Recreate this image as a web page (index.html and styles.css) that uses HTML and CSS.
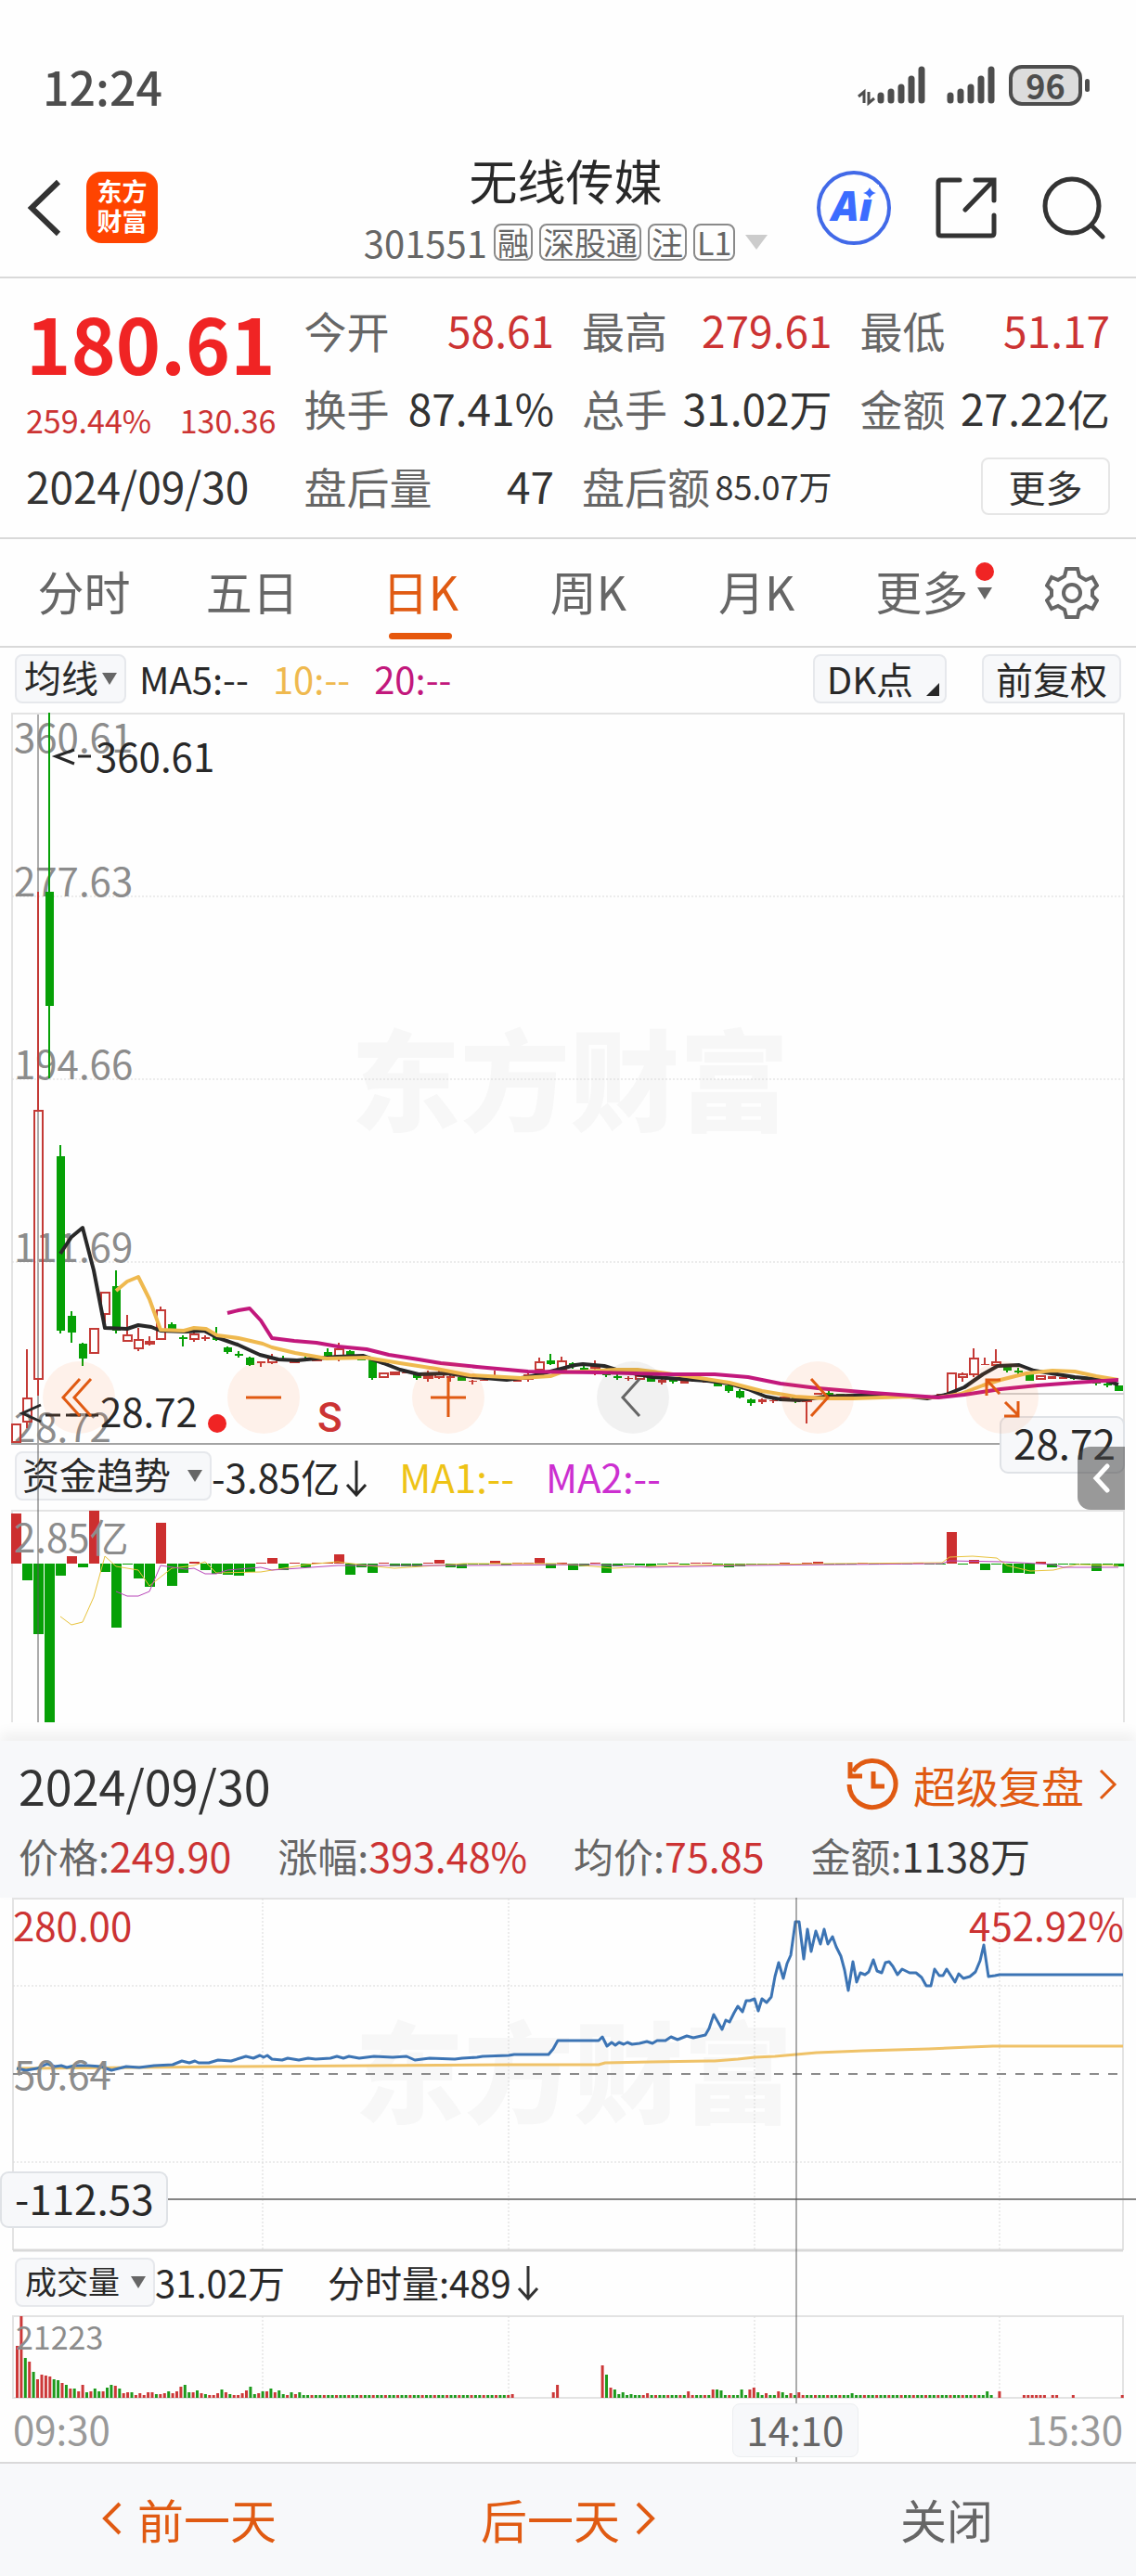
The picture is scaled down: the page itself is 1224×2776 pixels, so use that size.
FILE: index.html
```html
<!DOCTYPE html>
<html lang="zh-CN">
<head>
  <meta charset="UTF-8">
  <title>无线传媒 301551</title>
  <meta name="viewport" content="width=device-width, initial-scale=1.0">
  <link rel="stylesheet" href="styles.css">
</head>
<body>

  <div class="status">
    <span class="hora">12:24</span>
    <svg class="signal" viewBox="0 0 150 44" width="150" height="44">
      <path d="M2 34l6-5v12M13 29v12l6-5" fill="none" stroke="#4d4d4d" stroke-width="3"/>
      <g stroke="#4d4d4d" stroke-width="7" stroke-linecap="round">
        <path d="M26 33v5M37 29v9M48 24v14M59 15v23M70 5v33"/>
        <path d="M101 33v5M112 29v9M123 24v14M134 15v23M145 5v33"/>
      </g>
    </svg>
    <span class="battery">96</span>
  </div>

  <header class="header">
    <div class="side">
      <button class="icon" aria-label="返回">
        <svg viewBox="0 0 40 64" width="40" height="64"><path d="M35 4L6 32l29 28" fill="none" stroke="#333" stroke-width="6"/></svg>
      </button>
      <a class="logo" href="#">东方<br>财富</a>
    </div>
    <div class="title">
      <h1>无线传媒</h1>
      <div class="code">
        <span>301551</span><em>融</em><em>深股通</em><em>注</em><em>L1</em><i class="down"></i>
      </div>
    </div>
    <div class="side right">
      <button class="icon" aria-label="AI">
        <svg viewBox="0 0 82 82" width="82" height="82">
          <circle cx="41" cy="41" r="38" fill="none" stroke="#4169e8" stroke-width="4"/>
          <text x="17" y="55" class="ai">Ai</text>
          <path d="M50 16h18v16H50z" fill="#fff"/>
          <path d="M58 19q2 5 7 6q-5 1-7 6q-2-5-7-6q5-1 7-6z" fill="#3b6cff"/>
        </svg>
      </button>
      <button class="icon" aria-label="分享">
        <svg viewBox="0 0 68 68" width="68" height="68" fill="none" stroke="#333" stroke-width="5" stroke-linecap="round">
          <path d="M26 4H6q-3 0-3 3v54q0 3 3 3h54q3 0 3-3V42M43 4h20v22M62 5L32 36"/>
        </svg>
      </button>
      <button class="icon" aria-label="搜索">
        <svg viewBox="0 0 68 68" width="68" height="68" fill="none" stroke="#333" stroke-width="5" stroke-linecap="round">
          <circle cx="32" cy="32" r="29"/><path d="M53 53l12 12"/>
        </svg>
      </button>
    </div>
  </header>

  <section class="quote">
    <div class="price">
      <strong>180.61</strong>
      <p><span>259.44%</span><span>130.36</span></p>
      <time>2024/09/30</time>
    </div>
    <dl>
      <div><dt>今开</dt><dd class="red">58.61</dd></div>
      <div><dt>换手</dt><dd>87.41%</dd></div>
      <div><dt>盘后量</dt><dd>47</dd></div>
    </dl>
    <dl>
      <div><dt>最高</dt><dd class="red">279.61</dd></div>
      <div><dt>总手</dt><dd>31.02万</dd></div>
      <div><dt>盘后额</dt><dd class="small">85.07万</dd></div>
    </dl>
    <div class="last">
      <dl>
        <div><dt>最低</dt><dd class="red">51.17</dd></div>
        <div><dt>金额</dt><dd>27.22亿</dd></div>
      </dl>
      <button class="more">更多</button>
    </div>
  </section>

  <nav class="tabs">
    <button>分时</button>
    <button>五日</button>
    <button class="active">日K</button>
    <button>周K</button>
    <button>月K</button>
    <button class="dropdown">更多<span class="arrow"></span></button>
    <button class="gear" aria-label="设置">
      <svg viewBox="0 0 58 58" width="58" height="58" fill="none" stroke="#666" stroke-width="4">
        <path d="M23 3h12l2 8l7 4l7-3l5 9l-5 5v6l5 5l-5 9l-7-3l-7 4l-2 8H23l-2-8l-7-4l-7 3l-5-9l5-5v-6l-5-5l5-9l7 3l7-4z"/>
        <circle cx="29" cy="29" r="9"/>
      </svg>
    </button>
  </nav>

  <main>
    <div class="bar ma">
      <span class="pick tight"><select aria-label="均线"><option>均线</option></select></span>
      <span>MA5:--</span>
      <span class="yellow">10:--</span>
      <span class="magenta">20:--</span>
      <div class="tools">
        <button class="chip dk">DK点</button>
        <button class="chip">前复权</button>
      </div>
    </div>

    <section class="kline">
      <div class="canvas">
        <svg viewBox="0 768 1224 789" class="chart">
          <text class="watermark" x="378" y="1210">东方财富</text>
          <path class="frame" d="M13 1557V769H1211V1557"/>
          <path class="grid" d="M13 966H1211M13 1163H1211M13 1360H1211"/>
          <path d="M1075 1502H1211" stroke="#d0d0d0" stroke-width="2"/>
          <g class="axis">
            <text x="15" y="811">360.61</text>
            <text x="15" y="966">277.63</text>
            <text x="15" y="1163">194.66</text>
            <text x="15" y="1360">111.69</text>
            <text x="15" y="1554">28.72</text>
          </g>
          <g id="candles"></g>
          <polyline class="line" stroke="#282828" points="65,1351 77,1333 89,1323 101,1369 113,1431 137,1432 149,1428 163,1430 173,1434 200,1435 220,1434 233,1441 256,1449 280,1460 300,1465 320,1466 363,1462 391,1461 413,1469 431,1476 451,1481 482,1480 510,1484 546,1487 569,1484 593,1478 620,1471 628,1470 651,1472 667,1477 703,1484 762,1488 786,1491 806,1497 825,1505 841,1508 861,1509 889,1505 940,1503 972,1504 999,1507 1019,1503 1039,1495 1059,1481 1075,1472 1098,1471 1114,1477 1158,1484 1189,1487 1205,1492"/>
          <polyline class="line" stroke="#efb94f" points="125,1391 137,1381 149,1376 161,1400 173,1433 198,1434 209,1431 222,1432 234,1439 257,1442 283,1448 293,1452 318,1458 352,1464 395,1463 431,1469 470,1475 506,1482 561,1485 593,1483 604,1479 628,1478 663,1476 687,1476 711,1479 754,1485 786,1490 821,1499 857,1505 889,1507 920,1507 980,1505 1011,1506 1035,1502 1059,1493 1078,1487 1106,1480 1134,1477 1158,1478 1181,1483 1205,1487"/>
          <polyline class="line" stroke="#c2187c" points="245,1415 257,1412 269,1410 281,1423 293,1442 317,1445 341,1447 364,1451 395,1454 419,1460 451,1465 475,1469 514,1473 569,1478 644,1479 723,1481 770,1481 806,1484 841,1491 881,1496 940,1501 1011,1506 1039,1503 1078,1497 1118,1493 1158,1490 1205,1487"/>
          <g class="note">
            <path d="M80 808l-20 7l20 8M84 815h14"/>
            <text x="103" y="832">360.61</text>
            <path d="M44 1514l-20 9l20 9M49 1525h16M71 1525h16M92 1525h14"/>
            <text x="108" y="1538">28.72</text>
          </g>
          <circle cx="234" cy="1534" r="10" fill="#f02424"/>
          <text class="sell" x="342" y="1543">S</text>
          <path d="M12 1556H1212" stroke="#a3a3a3" stroke-width="2"/>
          <rect class="tag" x="1078" y="1527" width="133" height="60" rx="8"/>
          <text class="tagtext" x="1092" y="1573">28.72</text>
        </svg>
        <div class="zoombar">
          <button aria-label="最左"><svg viewBox="0 0 40 44"><path d="M21 2L3 22l18 20M33 2L15 22l18 20"/></svg></button>
          <button aria-label="缩小"><svg viewBox="0 0 40 44"><path d="M1 22h38"/></svg></button>
          <button aria-label="放大"><svg viewBox="0 0 40 44"><path d="M1 22h38M20 1v42"/></svg></button>
          <button class="off" aria-label="左移"><svg viewBox="0 0 40 44"><path d="M27 2L9 22l18 20"/></svg></button>
          <button aria-label="右移"><svg viewBox="0 0 40 44"><path d="M13 2l18 20l-18 20"/></svg></button>
          <button aria-label="全屏"><svg viewBox="0 0 40 44"><path d="M3 20V3h15M4 4l13 14M37 26v16H22M36 40L23 27"/></svg></button>
        </div>
      </div>

      <div class="bar fund">
        <span class="pick"><select aria-label="资金趋势"><option>资金趋势</option></select></span>
        <span>-3.85亿<svg viewBox="0 0 24 40" width="24" height="40"><path d="M12 1v36M2 27l10 11l10-11" fill="none" stroke="#282828" stroke-width="3"/></svg></span>
        <span class="gold">MA1:--</span>
        <span class="purple">MA2:--</span>
        <button class="expand" aria-label="展开">
          <svg viewBox="0 0 20 32" width="20" height="32"><path d="M16 3L4 16l12 13" fill="none" stroke="#fff" stroke-width="5" stroke-linecap="round"/></svg>
        </button>
      </div>

      <svg viewBox="0 1627 1224 229" class="chart">
        <path class="frame" d="M13 1856V1628H1211V1856"/>
        <g id="flow"></g>
        <text class="axis" x="15" y="1673">2.85亿</text>
        <polyline class="thin" stroke="#e8c33c" points="65,1742 77,1751 89,1748 101,1721 113,1677 125,1688 149,1692 161,1709 185,1690 209,1687 221,1683 233,1695 281,1694 330,1686 364,1683 395,1687 425,1690 500,1685 600,1685 640,1688 660,1690 720,1687 900,1685 1015,1684 1023,1678 1048,1677 1074,1679 1085,1687 1110,1693 1135,1692 1160,1686 1205,1687"/>
        <polyline class="thin" stroke="#b845b8" points="125,1715 137,1720 149,1720 161,1715 173,1687 200,1691 209,1690 221,1696 233,1696 245,1692 281,1689 293,1692 364,1687 500,1687 640,1686 700,1689 800,1687 1015,1685 1023,1682 1080,1683 1135,1686 1145,1689 1205,1689"/>
      </svg>
      <div class="cross day"></div>
    </section>

    <section class="panel">
      <div class="panel-head">
        <div class="row">
          <time>2024/09/30</time>
          <a href="#" class="replay">
            <svg viewBox="0 0 56 56" width="56" height="56" fill="none" stroke="#e05a12" stroke-width="5">
              <path d="M7 14a25 25 0 1 1-4 14"/><path d="M4 4v15h13M29 14v16h12"/>
            </svg>
            超级复盘
            <svg viewBox="0 0 20 34" width="20" height="34"><path d="M2 2l15 15L2 32" fill="none" stroke="#e05a12" stroke-width="3"/></svg>
          </a>
        </div>
        <p class="facts">
          <span>价格:<b class="red">249.90</b></span>
          <span>涨幅:<b class="red">393.48%</b></span>
          <span>均价:<b class="red">75.85</b></span>
          <span>金额:<b>1138万</b></span>
        </p>
      </div>

      <div class="minute">
        <svg viewBox="0 2045 1224 382" class="chart">
          <text class="watermark" x="382" y="2279">东方财富</text>
          <path class="frame" d="M14 2425V2046H1210V2425"/>
          <path class="grid" d="M14 2140H1210M14 2330H1210M283 2046V2425M548 2046V2425M813 2046V2425M1077 2046V2425"/>
          <path d="M14 2425H1210" stroke="#d9d9d9" stroke-width="3"/>
          <path d="M14 2235H1210" stroke="#8c8c8c" stroke-width="2" stroke-dasharray="10 10"/>
          <polyline class="mid" stroke="#efc268" points="18,2229 150,2228 250,2227 400,2226 550,2225 645,2225 652,2223 700,2222 770,2221 795,2219 813,2217 835,2216 880,2212 930,2210 1000,2208 1045,2206 1070,2205 1210,2205"/>
          <polyline class="mid" stroke="#3c74b4" points="18,2229 28,2231 40,2229 51,2224 59,2227 66,2226 72,2228 80,2226 95,2226 109,2227 120,2231 128,2229 136,2227 150,2228 166,2226 186,2225 196,2221 204,2223 210,2221 214,2223 225,2223 235,2220 249,2221 265,2216 273,2218 280,2215 284,2217 288,2215 293,2219 304,2220 310,2218 322,2220 332,2218 340,2219 356,2218 363,2216 370,2218 376,2216 387,2218 403,2216 423,2217 438,2216 447,2220 463,2218 490,2219 498,2218 514,2217 520,2216 548,2215 554,2214 591,2214 596,2208 601,2199 645,2199 649,2195 654,2205 659,2201 663,2204 667,2201 672,2203 676,2201 681,2203 689,2202 697,2200 703,2202 708,2199 717,2199 723,2195 730,2198 740,2194 747,2196 760,2193 764,2186 769,2171 773,2178 778,2187 782,2177 786,2179 791,2169 795,2162 800,2168 804,2156 808,2156 813,2154 817,2167 821,2154 826,2158 831,2152 835,2130 839,2115 844,2132 848,2116 852,2107 857,2071 861,2071 866,2111 870,2079 874,2103 879,2081 884,2095 888,2079 892,2095 897,2087 901,2098 906,2108 910,2123 914,2145 919,2114 923,2136 927,2126 932,2128 936,2125 941,2112 945,2124 950,2126 954,2115 958,2114 962,2119 967,2128 972,2122 980,2126 987,2126 993,2131 998,2140 1003,2140 1007,2122 1012,2129 1016,2129 1020,2122 1029,2136 1033,2127 1038,2132 1045,2130 1051,2125 1056,2113 1060,2096 1065,2130 1072,2129 1077,2128 1210,2128"/>
          <text class="axis up" x="14" y="2092">280.00</text>
          <text class="axis up" x="1211" y="2092" text-anchor="end">452.92%</text>
          <text class="axis" x="15" y="2252">50.64</text>
          <path d="M0 2370H1224" stroke="#858585" stroke-width="2"/>
          <rect class="tag" x="1" y="2341" width="179" height="59" rx="8"/>
          <text class="tagtext" x="16" y="2387">-112.53</text>
        </svg>

        <div class="bar vol">
          <span class="pick narrow"><select aria-label="成交量"><option>成交量</option></select></span>
          <span>31.02万</span>
          <span class="split">分时量:489<svg viewBox="0 0 24 40" width="24" height="40"><path d="M12 2v34M2 26l10 11l10-11" fill="none" stroke="#333" stroke-width="3"/></svg></span>
        </div>

        <svg viewBox="0 2495 1224 90" class="chart">
          <path class="frame" d="M14 2584V2496H1210V2584z"/>
          <path class="grid" d="M283 2496V2584M548 2496V2584M813 2496V2584M1077 2496V2584"/>
          <g id="volume"></g>
          <text class="axis little" x="17" y="2532">21223</text>
        </svg>

        <div class="hours">
          <span>09:30</span>
          <span>15:30</span>
        </div>
        <div class="cross time"></div>
        <span class="now">14:10</span>
      </div>
    </section>
  </main>

  <footer class="footer">
    <button><svg viewBox="0 0 22 36" width="22" height="36"><path d="M19 2L3 18l16 16" fill="none" stroke="#e05a12" stroke-width="4"/></svg>前一天</button>
    <button>后一天<svg viewBox="0 0 22 36" width="22" height="36"><path d="M3 2l16 16L3 34" fill="none" stroke="#e05a12" stroke-width="4"/></svg></button>
    <button class="close">关闭</button>
  </footer>

  <script src="script.js"></script>
</body>
</html>
```

FILE: styles.css
```css
* {
  margin: 0;
  padding: 0;
  box-sizing: border-box;
}

body {
  font-family: "Noto Sans CJK SC", "Noto Sans", sans-serif;
  font-size: 42px;
  color: #333;
  background: #fefefe;
}

button, select {
  font: inherit;
  color: inherit;
  background: none;
  border: none;
  cursor: pointer;
}

a {
  text-decoration: none;
}

.red {
  color: #cc3333;
}

/* status bar */
.status {
  display: flex;
  align-items: center;
  height: 149px;
  padding: 34px 58px 0 46px;
  line-height: 60px;
  color: #4d4d4d;
}

.hora {
  font-size: 50px;
  font-weight: 500;
  margin-right: auto;
}

.signal {
  margin-right: 14px;
}

.battery {
  position: relative;
  width: 79px;
  height: 44px;
  border: 4px solid #4d4d4d;
  border-radius: 14px;
  background: #dcdcdc;
  font-size: 36px;
  font-weight: 700;
  line-height: 34px;
  text-align: center;
}

.battery::after {
  content: "";
  position: absolute;
  right: -12px;
  top: 11px;
  width: 5px;
  height: 14px;
  border-radius: 3px;
  background: #4d4d4d;
}

/* header */
.header {
  display: flex;
  justify-content: space-between;
  height: 151px;
  padding: 0 33px 0 28px;
  border-bottom: 2px solid #d9d9d9;
}

.side {
  flex: 1;
  display: flex;
  align-items: center;
  gap: 25px;
}

.side.right {
  justify-content: flex-end;
  gap: 47px;
}

.icon, .icon svg {
  display: block;
}

.logo {
  width: 77px;
  height: 77px;
  padding-top: 5px;
  border-radius: 16px;
  background: #ff4400;
  color: #fff;
  font-size: 27px;
  font-weight: 700;
  line-height: 32px;
  text-align: center;
}

.ai {
  font-family: "Noto Sans", sans-serif;
  font-size: 44px;
  font-weight: 900;
  font-style: italic;
  fill: #3b6cff;
}

.title {
  text-align: center;
  padding-top: 12px;
}

.title h1 {
  font-size: 52px;
  font-weight: 400;
  line-height: 66px;
  color: #282828;
}

.code {
  display: flex;
  align-items: center;
  gap: 7px;
  margin-top: 13px;
  font-size: 40px;
  line-height: 42px;
  color: #666;
}

.code em {
  border: 2px solid #8a8a8a;
  border-radius: 8px;
  padding: 0 2px;
  font-size: 34px;
  font-style: normal;
  line-height: 36px;
}

.down {
  margin-left: 4px;
  border: 12px solid transparent;
  border-top: 16px solid #ccc;
  border-bottom: 0;
}

/* quote */
.quote {
  display: grid;
  grid-template-columns: repeat(4, minmax(0, 1fr));
  gap: 30px;
  padding: 13px 28px 14px;
  border-bottom: 2px solid #d9d9d9;
  font-size: 46px;
  line-height: 84px;
}

.price strong {
  display: block;
  font-size: 82px;
  line-height: 112px;
  white-space: nowrap;
  color: #f02424;
}

.price p {
  display: flex;
  justify-content: space-between;
  font-size: 34px;
  line-height: 56px;
  color: #cc3333;
}

.price time {
  display: block;
  white-space: nowrap;
}

.quote dl div {
  display: flex;
  justify-content: space-between;
  white-space: nowrap;
}

.quote dt {
  color: #666;
}

.quote .small {
  font-size: 36px;
}

.last {
  display: flex;
  flex-direction: column;
}

.more {
  align-self: flex-end;
  width: 139px;
  height: 62px;
  margin-top: 12px;
  border: 2px solid #e6e6e6;
  border-radius: 8px;
  font-size: 40px;
  line-height: 54px;
}

/* tabs */
.tabs {
  display: flex;
  height: 117px;
  border-bottom: 2px solid #d9d9d9;
  font-size: 50px;
  color: #666;
}

.tabs button {
  flex: 0 0 14.8%;
  position: relative;
  padding-bottom: 6px;
  white-space: nowrap;
}

.tabs .active {
  color: #e05a12;
}

.tabs .active::after {
  content: "";
  position: absolute;
  left: 50%;
  bottom: 7px;
  width: 68px;
  height: 7px;
  margin-left: -34px;
  border-radius: 4px;
  background: #e6570c;
}

.tabs .dropdown {
  padding-left: 20px;
}

.tabs .gear {
  flex: 1;
  padding-bottom: 0;
}

.gear svg {
  display: block;
  margin: auto;
}

.arrow {
  position: relative;
  display: inline-block;
  margin: 0 0 12px 10px;
  border: 8px solid transparent;
  border-top: 13px solid #666;
  border-bottom: 0;
}

.arrow::before {
  content: "";
  position: absolute;
  left: -10px;
  top: -40px;
  width: 20px;
  height: 20px;
  border-radius: 50%;
  background: #f02424;
}

/* indicator bars */
.bar {
  position: relative;
  display: flex;
  align-items: center;
  height: 70px;
  padding: 0 16px 4px;
  white-space: nowrap;
  color: #282828;
}

.ma {
  gap: 26px;
  font-size: 40px;
}

.tools {
  display: flex;
  gap: 38px;
  margin-left: auto;
}

.pick {
  position: relative;
  display: flex;
  align-items: center;
  height: 53px;
  border: 2px solid #e6e8ec;
  border-radius: 8px;
  background: #f7f8fa;
}

.pick::after {
  content: "";
  position: absolute;
  right: 8px;
  top: 18px;
  border: 8px solid transparent;
  border-top: 13px solid #666;
  border-bottom: 0;
  pointer-events: none;
}

.pick select {
  appearance: none;
  height: 60px;
  margin-top: -4px;
  padding: 0 42px 0 6px;
  font-size: 40px;
}

.pick.tight select {
  padding: 0 28px 0 8px;
}

.pick.narrow select {
  padding: 0 36px 0 9px;
  font-size: 34px;
}

.chip {
  position: relative;
  height: 53px;
  padding: 0 13px;
  border: 2px solid #e6e8ec;
  border-radius: 8px;
  background: #f7f8fa;
  line-height: 44px;
}

.dk {
  padding-right: 34px;
}

.dk::after {
  content: "";
  position: absolute;
  right: 6px;
  bottom: 6px;
  border-left: 14px solid transparent;
  border-bottom: 14px solid #282828;
}

.yellow { color: #efb94f; }
.magenta { color: #c2187c; }
.gold { color: #eec316; }
.purple { color: #cc2fd0; }

.fund {
  gap: 34px;
}

.fund .pick + span {
  margin-left: -34px;
}

.ma .pick + span {
  margin-left: -12px;
}

.bar span > svg {
  margin-left: 6px;
  vertical-align: -4px;
}

.vol {
  height: 68px;
  font-size: 40px;
}

.split {
  margin-left: 46px;
}

.expand {
  position: absolute;
  right: 12px;
  top: 2px;
  z-index: 2;
  width: 51px;
  height: 68px;
  border-radius: 14px 0 0 14px;
  background: rgba(70, 70, 70, 0.55);
}

.expand svg {
  display: block;
  margin: auto;
}

/* charts */
.kline, .minute, .canvas {
  position: relative;
}

.chart {
  display: block;
  width: 100%;
  height: auto;
  overflow: visible;
}

.canvas .chart {
  position: relative;
  z-index: 1;
}

.frame {
  fill: none;
  stroke: #e3e3e3;
  stroke-width: 2;
}

.grid {
  fill: none;
  stroke: #d9d9d9;
  stroke-width: 1;
  stroke-dasharray: 2 2;
}

.line, .mid, .thin {
  fill: none;
  stroke-width: 3;
  stroke-linejoin: round;
}

.line {
  stroke-width: 4;
}

.thin {
  stroke-width: 1;
}

.axis {
  font-size: 42px;
  fill: #8c8c8c;
}

.axis.up {
  fill: #cc3333;
}

.axis.little {
  font-size: 34px;
}

.watermark {
  font-size: 118px;
  font-weight: 900;
  fill: #f7f7f7;
}

.note {
  font-size: 42px;
  fill: #282828;
}

.note path {
  fill: none;
  stroke: #282828;
  stroke-width: 3;
}

.sell {
  font-family: Roboto, sans-serif;
  font-size: 44px;
  font-weight: 500;
  fill: #cc3333;
}

.tag {
  fill: #f7f8fa;
  stroke: #dfe2e6;
  stroke-width: 2;
}

.tagtext {
  font-size: 44px;
  fill: #282828;
}

.zoombar {
  position: absolute;
  left: 0;
  right: 0;
  bottom: 12px;
  z-index: 1;
  display: flex;
  justify-content: space-between;
  padding: 0 105px 0 46px;
}

.zoombar button {
  width: 78px;
  height: 78px;
  border-radius: 50%;
  background: rgba(255, 110, 30, 0.09);
}

.zoombar .off {
  background: rgba(0, 0, 0, 0.05);
}

.zoombar svg {
  display: block;
  width: 40px;
  height: 44px;
  margin: auto;
  fill: none;
  stroke: #e05a12;
  stroke-width: 3;
}

.zoombar .off svg {
  stroke: #666;
}

.cross {
  position: absolute;
  top: 0;
  bottom: 0;
  width: 2px;
  background: rgba(90, 90, 90, 0.5);
}

.cross.day {
  left: 3.3%;
}

.cross.time {
  left: 70%;
}

/* day detail */
.panel {
  margin-top: 20px;
}

.panel-head {
  padding: 4px 20px 0;
  height: 169px;
  background: #f7f8fa;
  box-shadow: 0 -8px 14px rgba(0, 0, 0, 0.06);
}

.row {
  display: flex;
  align-items: center;
  justify-content: space-between;
  height: 86px;
  font-size: 52px;
}

.replay {
  display: flex;
  align-items: center;
  gap: 16px;
  font-size: 46px;
  color: #e05a12;
}

.facts {
  display: flex;
  gap: 50px;
  font-size: 43px;
  line-height: 66px;
  white-space: nowrap;
  color: #666;
}

.facts b {
  font-weight: 400;
}

.facts b:not(.red) {
  color: #333;
}

.hours {
  display: flex;
  justify-content: space-between;
  height: 68px;
  padding: 0 14px;
  line-height: 64px;
  color: #999;
}

.now {
  position: absolute;
  left: 70%;
  bottom: 5px;
  width: 136px;
  height: 58px;
  margin-left: -68px;
  border: 1px solid #eceef0;
  border-radius: 8px;
  background: #f7f8fa;
  color: #666;
  line-height: 53px;
  text-align: center;
}

/* footer */
.footer {
  display: flex;
  height: 123px;
  padding-bottom: 4px;
  border-top: 2px solid #d9d9d9;
  background: #f7f8fa;
}

.footer button {
  flex: 1;
  display: flex;
  align-items: center;
  justify-content: center;
  gap: 16px;
  font-size: 50px;
  color: #e05a12;
}

.footer .close {
  color: #666;
}
```

FILE: script.js
```js
const RED = '#c43a36';
const GREEN = '#06a006';

// [color, body top, body bottom, wick top, wick bottom]
const candles = [
  ['r',1534,1555],['r',1506,1533,1454,1539],['r',1196,1487,961,1504],['g',961,1084,768,1162],['g',1246,1434,1234,1437],
  ['g',1418,1436,1413,1447],['g',1448,1464,1447,1472],['r',1431,1459],['r',1392,1417,1392,1430],['g',1386,1434,1369,1437],
  ['r',1438,1446,1417,1446],['r',1443,1454,1431,1456],['r',1445,1449,1440,1450],['r',1411,1444,1408,1444],['g',1427,1432,1425,1434],
  ['g',1441,1443,1439,1451],['r',1437,1444,1436,1446],['r',1441,1443,1439,1445],['g',1439,1444,1430,1445],['g',1452,1457,1451,1459],
  ['g',1459,1461,1456,1463],['g',1463,1471,1462,1472],['r',1467,1469,1467,1473],['r',1463,1469,1459,1470],['g',1464,1466,1461,1466],
  ['r',1464,1469],['g',1464,1466,1461,1466],['r',1461,1467],['g',1457,1462,1453,1464],['r',1453,1465,1447,1467],
  ['g',1456,1461,1455,1463],['g',1464,1466],['g',1466,1485,1465,1487],['r',1479,1485],['r',1478,1482],
  ['r',1479,1480],['g',1481,1485,1480,1487],['r',1482,1486,1477,1489],['r',1479,1485,1477,1486],['r',1483,1485,1479,1489],
  ['g',1484,1488],['r',1488,1489,1487,1492],['r',1487,1488],['r',1485,1487,1477,1487],['g',1486,1488],
  ['r',1487,1489],['r',1481,1487,1479,1489],['r',1467,1477,1463,1478],['g',1466,1470,1459,1471],['r',1466,1477,1462,1478],
  ['g',1469,1471,1468,1475],['g',1474,1476,1472,1477],['r',1471,1475,1466,1482],['g',1480,1482,1479,1484],['g',1483,1485,1481,1487],
  ['r',1485,1486,1483,1488],['r',1482,1487],['g',1484,1489],['r',1487,1490,1486,1492],['g',1487,1489,1486,1491],
  ['r',1488,1491],['r',1487,1489],['r',1488,1490],['g',1489,1494],['g',1493,1499,1492,1501],
  ['g',1499,1506,1497,1507],['g',1508,1512,1507,1515],['r',1508,1511,1507,1513],['r',1509,1510,1507,1512],['r',1505,1510],
  ['g',1506,1510,1505,1512],['r',1506,1511,1504,1534],['r',1501,1503],['g',1501,1503,1499,1505],['g',1502,1504],
  ['r',1503,1504],['g',1503,1504],['r',1503,1504],['g',1504,1505],['r',1504,1505],
  ['g',1505,1506],['r',1506,1507],['g',1506,1507],['r',1502,1504],['r',1479,1503],
  ['r',1480,1485,1479,1489],['r',1463,1482,1453,1484],['r',1470,1471,1463,1471],['r',1467,1472,1454,1472],['g',1472,1477,1471,1479],
  ['g',1477,1479,1474,1481],['g',1478,1488],['r',1482,1487],['r',1483,1486],['r',1484,1486],
  ['g',1484,1486,1482,1487],['r',1485,1487],['g',1489,1491,1488,1493],['g',1491,1493,1490,1495],['g',1493,1499]
];

// net money flow, pixels above (+) or below (-) the zero line
const flow = [
  54,-18,-76,-171,-13,8,-4,57,-9,-69,-1,-16,-25,44,-24,-10,2,-7,-11,-12,
  -13,-9,1,6,-7,1,-4,1,1,10,-12,-4,-10,1,-3,-3,-3,1,4,-4,
  -5,-1,-1,3,-2,1,1,6,-5,1,-7,-3,1,-10,-3,-1,-2,-3,-1,1,
  -1,1,1,-1,-4,-3,-1,-1,-1,1,-1,1,2,-1,-1,-1,1,-1,-1,-1,
  -1,1,-1,-1,34,-1,4,-7,-1,-10,-10,-11,2,-4,-1,-1,-1,-8,-1,-3
];

// volume per minute
const volume =
  'r56 r88 g43 r39 g28 r20 r25 r24 r23 g20 g19 r16 g14 r10 g10 r7 r14 g6 r7 g10 g7 r7 g11 g14 r13 g10 r5 r6 g6 r3 r5 r3 r6 r6 g4 r4 r5 g7 r5 r7 ' +
  'r12 g14 g6 r6 g8 r5 g4 r3 r3 r5 g9 r6 g4 r3 r3 r5 r8 g12 g4 r5 g7 r7 g10 r6 g8 g4 r3 g6 r4 g6';

function rect(x, y, w, h, fill, stroke) {
  return `<rect x="${x}" y="${y}" width="${w}" height="${h}" fill="${fill}"${stroke ? ` stroke="${stroke}" stroke-width="2"` : ''}/>`;
}

let html = '';
candles.forEach(([c, top, bottom, high, low], i) => {
  const x = 17 + i * 12;
  const color = c === 'r' ? RED : GREEN;
  if (high) {
    html += rect(x - 1, high, 2, Math.max(top - high, 0), color);
    html += rect(x - 1, bottom, 2, Math.max(low - bottom, 0), color);
  }
  if (c === 'r' && bottom - top > 3) {
    html += rect(x - 4, top + 1, 9, bottom - top - 2, 'none', color);
  } else {
    html += rect(x - 4, top, 9, bottom - top, color);
  }
});
document.getElementById('candles').innerHTML = html;

html = '';
flow.forEach((v, i) => {
  const h = Math.max(Math.abs(v), 1);
  html += rect(12 + i * 12, v > 0 ? 1685 - h : 1685, 11, h, v > 0 ? '#cc2f2f' : GREEN);
});
document.getElementById('flow').innerHTML = html;

const bars = volume.split(' ').map(s => [s[0], Number(s.slice(1))]);
for (let i = bars.length; i < 271; i++) {
  const quiet = (i > 121 && i < 143) || (i > 238 && i < 246) || i === 252 || i > 254;
  bars.push([i % 3 ? 'g' : 'r', quiet ? 0 : 3]);
}
const peaks = {
  121: 'r4', 131: 'r6', 132: 'r14', 143: 'r35', 144: 'g25', 145: 'r11', 146: 'g9', 147: 'g4', 148: 'g6',
  150: 'g4', 154: 'r5', 164: 'r7', 170: 'r9', 171: 'g9', 172: 'g8', 177: 'g9', 179: 'r9', 180: 'r11',
  181: 'g6', 183: 'r5', 186: 'r7', 187: 'g6', 189: 'r5', 191: 'r6', 204: 'g5', 237: 'g7', 240: 'r7',
  246: 'r3', 247: 'r3', 248: 'r3', 249: 'r3', 250: 'r3', 251: 'r3', 253: 'r3', 254: 'r3', 258: 'r3', 270: 'r3'
};
for (const k in peaks) bars[k] = [peaks[k][0], Number(peaks[k].slice(1))];

html = '';
bars.forEach(([c, h], i) => {
  if (h) html += rect((17 + i * 4.41).toFixed(1), 2584 - h, 3, h, c === 'r' ? '#cc3838' : '#1d9a1d');
});
document.getElementById('volume').innerHTML = html;
```
